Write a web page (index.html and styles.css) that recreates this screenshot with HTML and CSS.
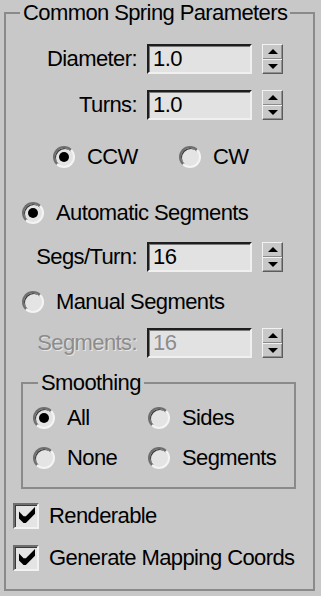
FILE: index.html
```html
<!doctype html>
<html lang="en">
  <head>
    <meta charset="utf-8">
    <meta name="viewport" content="width=device-width, initial-scale=1.0">
    <title>Common Spring Parameters</title>
    <link rel="stylesheet" href="styles.css">
  </head>
  <body>
    <fieldset class="group outer">
      <legend>Common Spring Parameters</legend>

      <div class="frow r1">
        <span class="lbl">Diameter:</span>
        <span class="num">1.0</span>
        <span class="spin"><i class="up"></i><i class="dn"></i></span>
      </div>
      <div class="frow r2">
        <span class="lbl">Turns:</span>
        <span class="num">1.0</span>
        <span class="spin"><i class="up"></i><i class="dn"></i></span>
      </div>

      <div class="rrow r3">
        <span class="opt w-ccw"><span class="radio on"></span>CCW</span>
        <span class="opt"><span class="radio"></span>CW</span>
      </div>

      <div class="rrow r4">
        <span class="opt"><span class="radio on"></span>Automatic Segments</span>
      </div>
      <div class="frow r5">
        <span class="lbl">Segs/Turn:</span>
        <span class="num">16</span>
        <span class="spin"><i class="up"></i><i class="dn"></i></span>
      </div>

      <div class="rrow r6">
        <span class="opt"><span class="radio"></span>Manual Segments</span>
      </div>
      <div class="frow r7 off">
        <span class="lbl">Segments:</span>
        <span class="num">16</span>
        <span class="spin"><i class="up"></i><i class="dn"></i></span>
      </div>

      <fieldset class="group smooth">
        <legend>Smoothing</legend>
        <div class="srow s1">
          <span class="opt w-all"><span class="radio on"></span>All</span>
          <span class="opt"><span class="radio"></span>Sides</span>
        </div>
        <div class="srow s2">
          <span class="opt w-all"><span class="radio"></span>None</span>
          <span class="opt"><span class="radio"></span>Segments</span>
        </div>
      </fieldset>

      <div class="crow c1">
        <span class="check"><svg viewBox="0 0 7 7" width="16" height="16"><polygon points="0,2 2,4 3,4 7,0 7,3 3,7 2,7 0,5"/></svg></span>
        Renderable
      </div>
      <div class="crow c2">
        <span class="check"><svg viewBox="0 0 7 7" width="16" height="16"><polygon points="0,2 2,4 3,4 7,0 7,3 3,7 2,7 0,5"/></svg></span>
        Generate Mapping Coords
      </div>
    </fieldset>
  </body>
</html>
```

FILE: styles.css
```css
body {
    margin: 0;
    background-color: #c8c8c8;
    color: #000000;
    font-family: "Liberation Sans", Arial, sans-serif;
    font-size: 22px;
    line-height: 24px;
    letter-spacing: -0.6px;
}

/* group boxes */
.group {
    min-width: 0;
    border: 2px solid #8a8a8a;
}
.outer {
    margin: 1px 6px 5px 4px;
    padding: 0 0 18px 0;
}
.outer > legend {
    margin-left: 14px;
    padding: 0 3px;
}
.smooth {
    margin: 13px 17px 0 15px;
    padding: 0 0 17px 0;
}
.smooth > legend {
    margin-left: 15px;
    padding: 0 3px;
}

/* spinner rows */
.frow {
    display: flex;
    align-items: center;
    height: 30px;
}
.lbl {
    width: 131px;
    text-align: right;
}
.num {
    box-sizing: border-box;
    display: flex;
    align-items: center;
    width: 105px;
    height: 30px;
    margin-left: 10px;
    padding-left: 4px;
    background-color: #e2e2e2;
    border: 2px solid;
    border-color: #1e1e1e #f0f0f0 #f0f0f0 #1e1e1e;
    box-shadow: inset 1px 1px 0 #7a7a7a;
}
.spin {
    box-sizing: border-box;
    display: flex;
    flex-direction: column;
    width: 21px;
    height: 30px;
    margin-left: 10px;
    border: 1px solid;
    border-color: #f2f2f2 #5c5c5c #5c5c5c #f2f2f2;
    box-shadow: inset -1px -1px 0 #909090;
}
.spin i {
    flex: 1;
    display: flex;
    align-items: center;
    justify-content: center;
}
.spin .up {
    border-bottom: 1px solid #8a8a8a;
}
.spin .dn {
    border-top: 1px solid #f2f2f2;
}
.spin .up::before,
.spin .dn::before {
    content: "";
    border-left: 5px solid transparent;
    border-right: 5px solid transparent;
}
.spin .up::before {
    border-bottom: 5px solid #000000;
}
.spin .dn::before {
    border-top: 5px solid #000000;
}

.off .lbl,
.off .num {
    color: #8c8c8c;
    text-shadow: 1px 1px 0 #e6e6e6;
}

/* radio rows */
.rrow,
.srow {
    display: flex;
    align-items: center;
    height: 24px;
}
.opt {
    display: flex;
    align-items: center;
    gap: 12px;
}
.radio {
    box-sizing: border-box;
    display: flex;
    align-items: center;
    justify-content: center;
    width: 22px;
    height: 22px;
    border-radius: 50%;
    border: 2px solid;
    border-color: #6e6e6e #f4f4f4 #f4f4f4 #6e6e6e;
    background-color: #e4e4e4;
    box-shadow: inset 1px 1px 0 #3a3a3a;
}
.radio.on::after {
    content: "";
    width: 10px;
    height: 10px;
    border-radius: 50%;
    background-color: #000000;
}
.w-ccw { width: 126px; }
.w-all { width: 115px; }

.r1 { margin-top: 19px; }
.r2 { margin-top: 16px; }
.r3 { margin-top: 25px; padding-left: 47px; }
.r4 { margin-top: 32px; padding-left: 16px; }
.r5 { margin-top: 17px; }
.r6 { margin-top: 18px; padding-left: 16px; }
.r7 { margin-top: 14px; }

.srow { padding-left: 10px; }
.s1 { margin-top: 11px; }
.s2 { margin-top: 16px; }

/* check boxes */
.crow {
    display: flex;
    align-items: center;
    gap: 10px;
    height: 26px;
    padding-left: 7px;
}
.check {
    box-sizing: border-box;
    width: 26px;
    height: 26px;
    padding: 2px 0 0 4px;
    background-color: #e4e4e4;
    border: 2px solid;
    border-color: #6e6e6e #f2f2f2 #f2f2f2 #6e6e6e;
    box-shadow: inset 1px 1px 0 #3a3a3a;
}
.check svg {
    display: block;
    fill: #000000;
}
.c1 { margin-top: 14px; }
.c2 { margin-top: 16px; }
```
